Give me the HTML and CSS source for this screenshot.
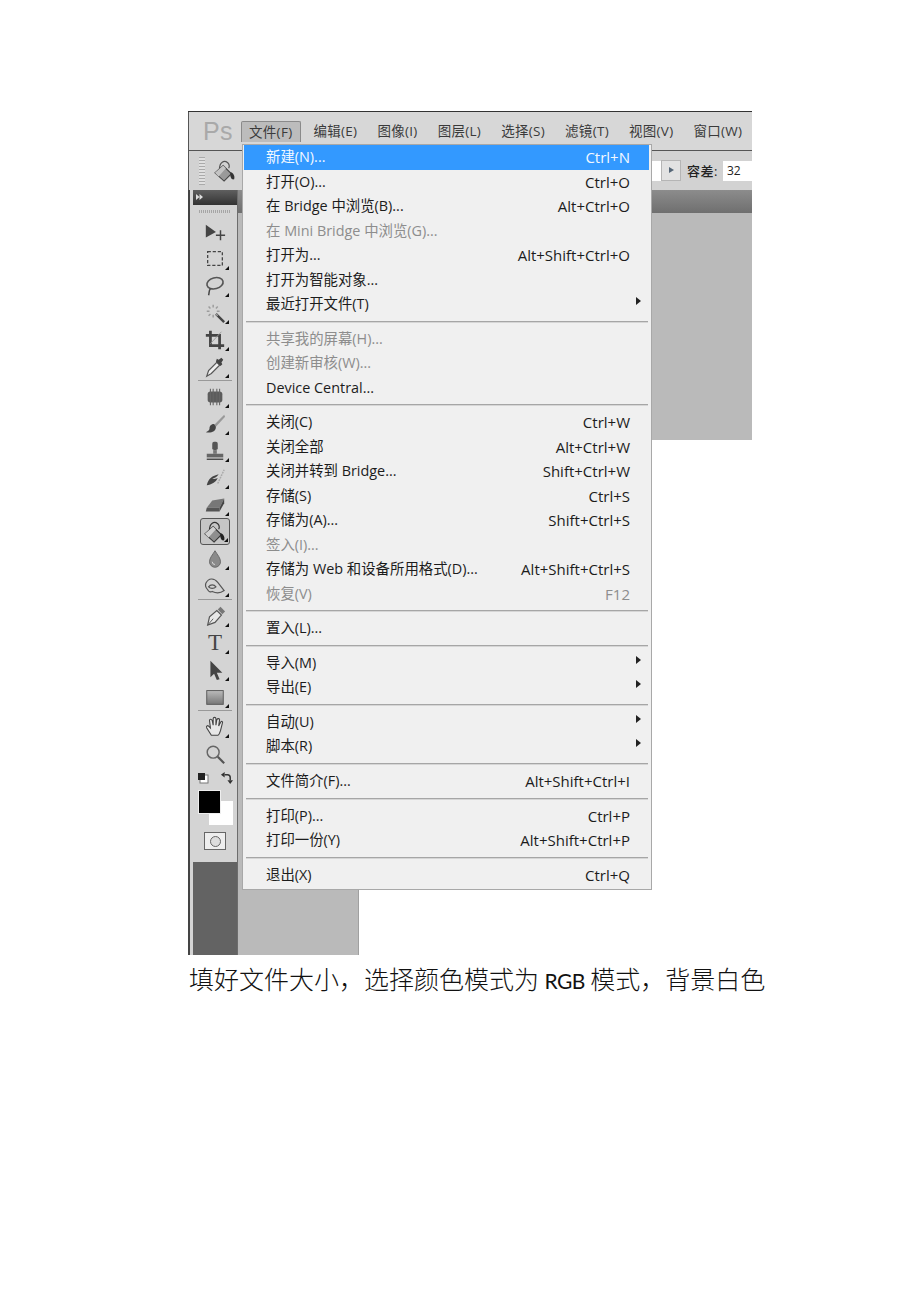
FILE: index.html
```html
<!DOCTYPE html>
<html lang="zh-CN">
    <head>
        <meta charset="UTF-8">
        <meta name="viewport" content="width=device-width, initial-scale=1.0">
        <title>新建文件</title>
        <link rel="stylesheet" href="styles.css">
    </head>
    <body>
        <div class="shot">
            <div class="menubar">
                <div class="ps-logo">Ps</div>
                <div class="top-item top-active">文件(F)</div>
                <div class="top-item">编辑(E)</div>
                <div class="top-item">图像(I)</div>
                <div class="top-item">图层(L)</div>
                <div class="top-item">选择(S)</div>
                <div class="top-item">滤镜(T)</div>
                <div class="top-item">视图(V)</div>
                <div class="top-item">窗口(W)</div>
            </div>
            <div class="optbar">
                <div class="grip"></div>
                <svg class="opt-bucket" viewBox="0 0 24 24"><path d="M6 10C6 2 11 0 15 3c2 2 2 4 1 6" fill="none" stroke="#555" stroke-width="1.3"/><path d="M1 14 10 6l9 9-8 8z" fill="#9a9a9a" stroke="#444" stroke-width="1.2"/><path d="M1 14 10 6l3 3-8 9z" fill="#c4c4c4"/><path d="M18 13c3 1 5 4 4 8-3 1-5-3-4-8z" fill="#333"/></svg>
                <div class="opt-field"></div>
                <div class="opt-arrow"></div>
                <div class="opt-label">容差:</div>
                <div class="opt-input">32</div>
            </div>
            <div class="main">
                <div class="toolbar">
                    <div class="tool-head"><span class="head-arrows"></span></div>
                    <div class="tool-grip"></div>

                    <div class="tool"><svg viewBox="0 0 24 24"><path d="M2 4 13 12 2 18z" fill="#444"/><path d="M18 10v11M13 15.500h10" stroke="#444" stroke-width="1.6"/></svg></div>
                    <div class="tool more"><svg viewBox="0 0 24 24"><rect x="4" y="4" width="16" height="15" fill="none" stroke="#444" stroke-width="1.4" stroke-dasharray="3.500 2"/></svg></div>
                    <div class="tool more"><svg viewBox="0 0 24 24"><ellipse cx="12" cy="9" rx="9" ry="6" transform="rotate(-15 12 9)" fill="none" stroke="#555" stroke-width="1.8"/><path d="M7 15c-2 2-1 4-2 7" fill="none" stroke="#444" stroke-width="1.6"/></svg></div>
                    <div class="tool more"><svg viewBox="0 0 24 24"><path d="M13 13l9 9" stroke="#444" stroke-width="2.6"/><path d="M10 3v3M10 14v3M3 10h3M14 10h3M5 5l2 2M13 13l2 2M15 5l-2 2M5 15l2-2" stroke="#9c9c9c" stroke-width="1.6"/></svg></div>
                    <div class="tool more"><svg viewBox="0 0 24 24"><path d="M7 2v16h15M2 7h15v15" fill="none" stroke="#444" stroke-width="3"/><path d="M19 3 7 16" stroke="#999"/></svg></div>
                    <div class="tool more"><svg viewBox="0 0 24 24"><path d="M3 22l2-6L14 7l3 3-9 9z" fill="#eee" stroke="#555" stroke-width="1.3"/><path d="M13 6l5 5 2-2-1-2 2-3-2-2-3 2-2-1z" fill="#444"/></svg></div>
                    <div class="tool-sep"></div>

                    <div class="tool more"><svg viewBox="0 0 24 24"><rect x="4" y="6" width="16" height="12" rx="3" fill="#5c5c5c"/><path d="M7 3v18M10 3v18M14 3v18M17 3v18" stroke="#666" stroke-width="1.2"/></svg></div>
                    <div class="tool more"><svg viewBox="0 0 24 24"><path d="M22 2 11 13l2 2L23 4z" fill="#999"/><path d="M11 12c-4 0-5 3-5 5s-2 3-4 4c5 1 11 0 11-6z" fill="#444"/></svg></div>
                    <div class="tool more"><svg viewBox="0 0 24 24"><rect x="9" y="2" width="6" height="9" rx="2" fill="#555"/><path d="M10 11h4v4h-4z" fill="#777"/><rect x="3" y="15" width="18" height="4" fill="#666"/><path d="M3 21h18" stroke="#444" stroke-width="1.5"/></svg></div>
                    <div class="tool more"><svg viewBox="0 0 24 24"><path d="M3 20c2-8 6-10 13-12-2 3-4 4-7 5 3 0 4 0 6-1-2 5-7 7-12 8z" fill="#444"/><path d="M15 18 22 3" stroke="#aaa" stroke-width="1.6" stroke-dasharray="2 1"/></svg></div>
                    <div class="tool more"><svg viewBox="0 0 24 24"><path d="M9 7 22 5l-5 10H3z" fill="#777"/><path d="M3 15h14v4H2z" fill="#555"/><path d="M17 15v4l5-9V5z" fill="#444"/></svg></div>
                    <div class="tool tool-on more"><svg viewBox="0 0 24 24"><path d="M6 10C6 2 11 0 15 3c2 2 2 4 1 6" fill="none" stroke="#333" stroke-width="1.3"/><path d="M1 14 10 6l9 9-8 8z" fill="#8f8f8f" stroke="#333" stroke-width="1.2"/><path d="M1 14 10 6l3 3-8 9z" fill="#d0d0d0"/><path d="M18 13c3 1 5 4 4 8-3 1-5-3-4-8z" fill="#222"/></svg></div>
                    <div class="tool more"><svg viewBox="0 0 24 24"><path d="M12 3c3 5 6 8 6 12a6 6 0 0 1-12 0c0-4 3-7 6-12z" fill="#8a8a8a" stroke="#666"/><path d="M9 15a3 3 0 0 0 3 3" stroke="#ddd" fill="none"/></svg></div>
                    <div class="tool more"><svg viewBox="0 0 24 24"><path d="M2 9c3-6 9-6 13-1l7 9c-4 3-9 3-13 1-2 1-4 0-5-2-2-2-3-4-2-7z" fill="none" stroke="#555" stroke-width="1.3"/><path d="M5 13c2-3 6-3 8 0-2 2-6 2-8 0z" fill="none" stroke="#555" stroke-width="1.3"/></svg></div>
                    <div class="tool-sep"></div>

                    <div class="tool more"><svg viewBox="0 0 24 24"><path d="M4 22l2-9 8-7 5 5-7 8z" fill="#e8e8e8" stroke="#555" stroke-width="1.3"/><path d="M4 22l6-7" stroke="#555"/><path d="M15 5l3-3 5 5-3 3z" fill="#777"/></svg></div>
                    <div class="tool more tool-t">T</div>
                    <div class="tool more"><svg viewBox="0 0 24 24"><path d="M7 2l13 13-6 0 3 7-3 1-3-7-4 4z" fill="#444"/></svg></div>
                    <div class="tool more"><svg viewBox="0 0 24 24"><defs><linearGradient id="rect-fill" x1="0" y1="0" x2="0" y2="1"><stop offset="0" stop-color="#bbb"/><stop offset="1" stop-color="#777"/></linearGradient></defs><rect x="3" y="5" width="18" height="15" fill="url(#rect-fill)" stroke="#555"/></svg></div>
                    <div class="tool-sep"></div>

                    <div class="tool more"><svg viewBox="0 0 24 24"><path d="M8 21 3 13c-1-2 1-3 2-2l2 2-1-8c0-2 2-2 3 0l1 5V3c0-2 3-2 3 0v7l1-6c1-2 3-1 3 0l-1 7 2-4c1-2 3-1 2 1l-2 8c-1 3-2 5-3 5z" fill="#e8e8e8" stroke="#444" stroke-width="1.2"/></svg></div>
                    <div class="tool"><svg viewBox="0 0 24 24"><circle cx="10" cy="10" r="6.500" fill="none" stroke="#666" stroke-width="1.6"/><path d="M15 15l7 7" stroke="#555" stroke-width="2.400"/></svg></div>

                    <div class="swap-row">
                        <svg class="mini-swatch" viewBox="0 0 12 12"><rect x="3" y="3" width="8" height="8" fill="#fff" stroke="#777"/><rect x="1" y="1" width="7" height="7" fill="#222"/></svg>
                        <svg class="mini-swap" viewBox="0 0 14 14"><path d="M5 3h3c2 0 3 1 3 3v3" fill="none" stroke="#333" stroke-width="1.6"/><path d="M1 3l4-3v6zM8 9h6l-3 4z" fill="#333"/></svg>
                    </div>
                    <div class="swatches"><div class="swatch-bg"></div><div class="swatch-fg"></div></div>
                    <div class="mask-btn"><span></span></div>
                    <div class="tool-end"></div>
                </div>
                <div class="work">
                    <div class="tabstrip"></div>
                    <div class="canvas-top"></div>
                    <div class="canvas-low">
                        <div class="canvas-left"></div>
                        <div class="canvas-blank"></div>
                    </div>
                </div>
            </div>

            <div class="filemenu">
                <div class="mi mi-on"><span>新建(N)...</span><span>Ctrl+N</span></div>
                <div class="mi"><span>打开(O)...</span><span>Ctrl+O</span></div>
                <div class="mi"><span>在 Bridge 中浏览(B)...</span><span>Alt+Ctrl+O</span></div>
                <div class="mi mi-off"><span>在 Mini Bridge 中浏览(G)...</span></div>
                <div class="mi"><span>打开为...</span><span>Alt+Shift+Ctrl+O</span></div>
                <div class="mi"><span>打开为智能对象...</span></div>
                <div class="mi mi-sub"><span>最近打开文件(T)</span></div>
                <div class="msep"></div>
                <div class="mi mi-off"><span>共享我的屏幕(H)...</span></div>
                <div class="mi mi-off"><span>创建新审核(W)...</span></div>
                <div class="mi"><span>Device Central...</span></div>
                <div class="msep"></div>
                <div class="mi"><span>关闭(C)</span><span>Ctrl+W</span></div>
                <div class="mi"><span>关闭全部</span><span>Alt+Ctrl+W</span></div>
                <div class="mi"><span>关闭并转到 Bridge...</span><span>Shift+Ctrl+W</span></div>
                <div class="mi"><span>存储(S)</span><span>Ctrl+S</span></div>
                <div class="mi"><span>存储为(A)...</span><span>Shift+Ctrl+S</span></div>
                <div class="mi mi-off"><span>签入(I)...</span></div>
                <div class="mi"><span>存储为 Web 和设备所用格式(D)...</span><span>Alt+Shift+Ctrl+S</span></div>
                <div class="mi mi-off"><span>恢复(V)</span><span>F12</span></div>
                <div class="msep"></div>
                <div class="mi"><span>置入(L)...</span></div>
                <div class="msep"></div>
                <div class="mi mi-sub"><span>导入(M)</span></div>
                <div class="mi mi-sub"><span>导出(E)</span></div>
                <div class="msep"></div>
                <div class="mi mi-sub"><span>自动(U)</span></div>
                <div class="mi mi-sub"><span>脚本(R)</span></div>
                <div class="msep"></div>
                <div class="mi"><span>文件简介(F)...</span><span>Alt+Shift+Ctrl+I</span></div>
                <div class="msep"></div>
                <div class="mi"><span>打印(P)...</span><span>Ctrl+P</span></div>
                <div class="mi"><span>打印一份(Y)</span><span>Alt+Shift+Ctrl+P</span></div>
                <div class="msep"></div>
                <div class="mi"><span>退出(X)</span><span>Ctrl+Q</span></div>
            </div>
        </div>
        <p class="caption">填好文件大小，选择颜色模式为 <span class="latin">RGB</span> 模式，背景白色</p>
    </body>
</html>
```

FILE: styles.css
```css
html, body {
    margin: 0px;
    padding: 0px;
    background-color: #fff;
}
body {
    height: 1302px;
    overflow: hidden;
    padding: 111px 0px 0px 188px;
    box-sizing: border-box;
    font-family: "Open Sans", "Noto Sans CJK SC", sans-serif;
}

.shot {
    position: relative;
    width: 564px;
    height: 844px;
    display: flex;
    flex-direction: column;
    overflow: hidden;
    border-top: 1px solid #333;
    box-sizing: border-box;
    color: #222;
}

/* top menu */
.menubar {
    height: 38px;
    display: flex;
    align-items: flex-start;
    background-color: #d7d7d7;
    border-left: 1px solid #555;
    border-bottom: 1px solid #555;
    font-size: 13.5px;
    letter-spacing: 0.3px;
    color: #3a3a3a;
    flex-shrink: 0;
}
.ps-logo {
    width: 52px;
    flex-shrink: 0;
    padding-left: 14px;
    box-sizing: border-box;
    font-family: "Liberation Sans", sans-serif;
    font-size: 25px;
    line-height: 38px;
    color: #a9a9a9;
}
.top-item {
    margin-top: 9px;
    height: 20px;
    line-height: 20px;
    padding: 0px 7px;
    margin-right: 6px;
    flex-shrink: 0;
    white-space: nowrap;
}
.top-active {
    margin-right: 5px;
    padding-right: 8px;
    background-color: #bcbcbc;
    border: 1px solid #8a8a8a;
    border-bottom: none;
    border-radius: 2px 2px 0px 0px;
}

/* options bar */
.optbar {
    height: 39px;
    display: flex;
    align-items: center;
    background-color: #d2d2d2;
    border-left: 1px solid #555;
    flex-shrink: 0;
    font-size: 13px;
}
.grip {
    width: 6px;
    height: 28px;
    margin-left: 10px;
    background: repeating-linear-gradient(#aaa 0px, #aaa 1px, #e0e0e0 1px, #e0e0e0 3px);
}
.opt-bucket {
    width: 22px;
    height: 22px;
    margin-left: 9px;
}
.opt-field {
    width: 10px;
    height: 20px;
    margin-left: 415px;
    background-color: #fff;
}
.opt-arrow {
    width: 18px;
    height: 19px;
    border: 1px solid #b5b5b5;
    background-color: #e2e2e2;
    position: relative;
}
.opt-arrow::after {
    content: "";
    position: absolute;
    left: 7px;
    top: 6px;
    border-left: 5px solid #567;
    border-top: 3px solid transparent;
    border-bottom: 3px solid transparent;
}
.opt-label {
    margin-left: 6px;
    width: 36px;
    font-weight: 500;
    letter-spacing: 0.5px;
}
.opt-input {
    flex: 1;
    height: 20px;
    line-height: 20px;
    background-color: #fff;
    padding-left: 4px;
    font-size: 12px;
}

.main {
    flex: 1;
    display: flex;
    min-height: 0px;
}

/* tools */
.toolbar {
    width: 50px;
    flex-shrink: 0;
    display: flex;
    flex-direction: column;
    align-items: center;
    background-color: #d4d4d4;
    border-left: 2px solid #444;
    border-right: 1px solid #6d6d6d;
    padding-left: 3px;
    box-sizing: border-box;
}
.tool-head {
    width: 100%;
    height: 15px;
    background: linear-gradient(#5f5f5f, #333);
    flex-shrink: 0;
}
.head-arrows {
    display: block;
    width: 7px;
    height: 6px;
    margin: 4px 0px 0px 3px;
    background-color: #ddd;
    clip-path: polygon(0 0, 50% 50%, 50% 0, 100% 50%, 50% 100%, 50% 50%, 0 100%);
}
.tool-grip {
    width: 32px;
    height: 13px;
    flex-shrink: 0;
    background: repeating-linear-gradient(90deg, #a5a5a5 0px, #a5a5a5 1px, #d4d4d4 1px, #d4d4d4 2px) center 5px / 100% 3px no-repeat;
}
.tool {
    position: relative;
    width: 30px;
    height: 27px;
    flex-shrink: 0;
    display: flex;
    align-items: center;
    justify-content: center;
    box-sizing: border-box;
}
.tool svg {
    width: 22px;
    height: 22px;
}
.more::after {
    content: "";
    position: absolute;
    right: 1px;
    bottom: 2px;
    border-right: 4px solid #111;
    border-top: 4px solid transparent;
}
.tool-on {
    border: 1px solid #555;
    border-radius: 3px;
    background-color: #c6c6c6;
}
.tool-t {
    font-family: "Liberation Serif", serif;
    font-size: 23px;
    color: #444;
}
.tool-sep {
    width: 34px;
    height: 3px;
    flex-shrink: 0;
    box-sizing: border-box;
    border-top: 1px solid #999;
}
.swap-row {
    width: 36px;
    height: 22px;
    flex-shrink: 0;
    display: flex;
    justify-content: space-between;
    align-items: center;
}
.mini-swatch {
    width: 12px;
    height: 12px;
}
.mini-swap {
    width: 13px;
    height: 13px;
}
.swatches {
    position: relative;
    width: 36px;
    height: 38px;
    flex-shrink: 0;
}
.swatch-fg {
    position: absolute;
    left: 1px;
    top: 1px;
    width: 21px;
    height: 22px;
    background-color: #000;
    border: 1px solid #eee;
}
.swatch-bg {
    position: absolute;
    left: 12px;
    top: 12px;
    width: 24px;
    height: 24px;
    background-color: #fff;
}
.mask-btn {
    width: 20px;
    height: 16px;
    margin-top: 5px;
    flex-shrink: 0;
    border: 1px solid #666;
    background-color: #eee;
    display: flex;
    align-items: center;
    justify-content: center;
}
.mask-btn span {
    width: 11px;
    height: 11px;
    border: 1px solid #666;
    border-radius: 50%;
    background-color: #ddd;
    box-sizing: border-box;
}
.tool-end {
    width: 100%;
    flex: 1;
    margin-top: 12px;
    background-color: #636363;
}

/* workspace */
.work {
    flex: 1;
    display: flex;
    flex-direction: column;
}
.tabstrip {
    height: 23px;
    flex-shrink: 0;
    background: linear-gradient(#8c8c8c, #6f6f6f);
}
.canvas-top {
    height: 227px;
    flex-shrink: 0;
    background-color: #bababa;
}
.canvas-low {
    flex: 1;
    display: flex;
}
.canvas-left {
    width: 120px;
    background-color: #bababa;
    border-right: 1px solid #a0a0a0;
}
.canvas-blank {
    flex: 1;
    background-color: #fff;
}

/* file menu */
.filemenu {
    position: absolute;
    left: 54px;
    top: 32px;
    width: 410px;
    height: 746px;
    box-sizing: border-box;
    padding: 0px 2px 0px 1px;
    background-color: #f0f0f0;
    border: 1px solid #a8a8a8;
    font-size: 14.4px;
    color: #1c1c1c;
}
.mi {
    position: relative;
    height: 24.5px;
    line-height: 24.5px;
    display: flex;
    justify-content: space-between;
    padding: 0px 19px 0px 22px;
    white-space: nowrap;
}
.mi span + span {
    font-size: 15px;
}
.mi-on {
    background-color: #3399ff;
    color: #f2f8ff;
}
.mi-off {
    color: #8d8d8d;
}
.mi-sub::after {
    content: "";
    position: absolute;
    right: 8px;
    top: 5px;
    border-left: 5px solid #222;
    border-top: 4px solid transparent;
    border-bottom: 4px solid transparent;
}
.msep {
    height: 10.1px;
    display: flex;
    align-items: center;
    padding: 0px 1px 0px 2px;
}
.msep::after {
    content: "";
    flex: 1;
    height: 1px;
    background-color: #a6a6a6;
    border-bottom: 1px solid #d6d6d6;
}

.caption {
    margin: 10px 0px 0px 1px;
    font-family: "Noto Sans CJK SC", sans-serif;
    font-size: 25px;
    font-weight: 300;
    line-height: 27px;
    color: #111;
    white-space: nowrap;
}
.latin {
    font-family: "Lato", sans-serif;
    font-size: 21px;
    font-weight: 400;
    letter-spacing: -0.6px;
}
```
